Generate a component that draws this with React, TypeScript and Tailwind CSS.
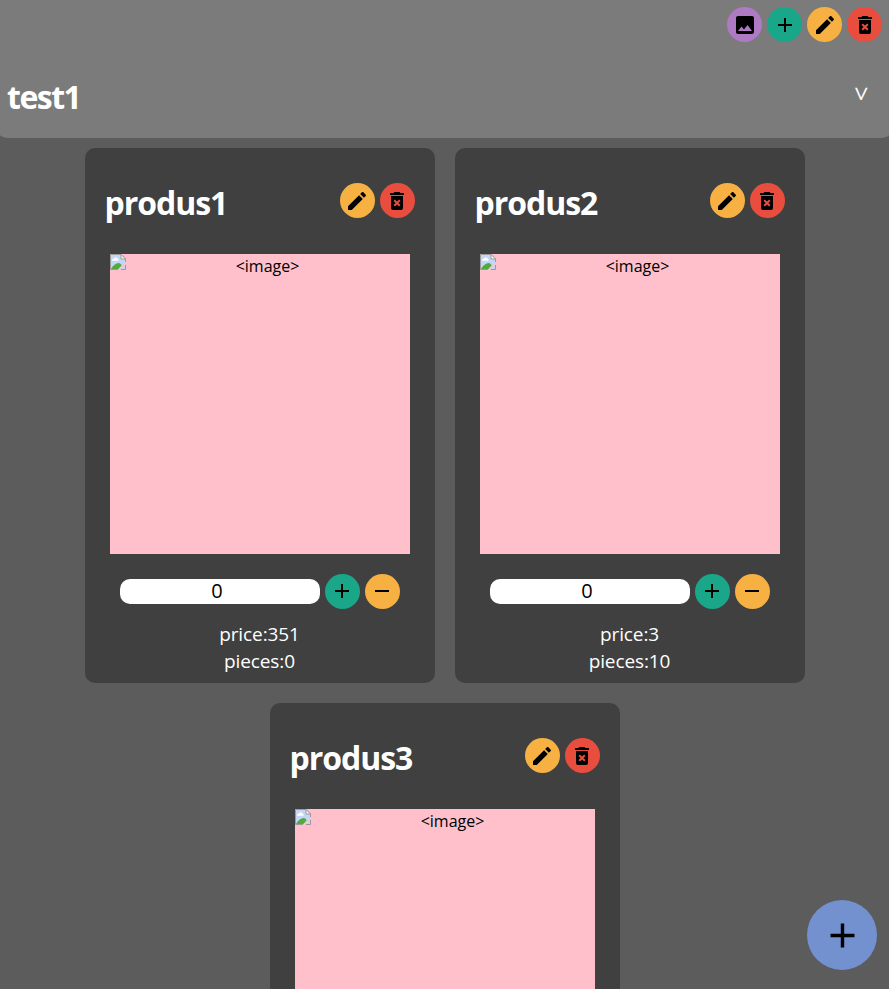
import React from "react";

const PATHS = {
  image:
    "M21 19V5c0-1.1-.9-2-2-2H5c-1.1 0-2 .9-2 2v14c0 1.1.9 2 2 2h14c1.1 0 2-.9 2-2zM8.5 13.5l2.5 3.01L14.5 12l4.5 6H5l3.5-4.5z",
  add: "M19 13h-6v6h-2v-6H5v-2h6V5h2v6h6v2z",
  remove: "M19 13H5v-2h14v2z",
  edit: "M3 17.25V21h3.75L17.81 9.94l-3.75-3.75L3 17.25zM20.71 7.04c.39-.39.39-1.02 0-1.41l-2.34-2.34c-.39-.39-1.02-.39-1.41 0l-1.83 1.83 3.75 3.75 1.83-1.83z",
  trash:
    "M6 19a2 2 0 0 0 2 2h8a2 2 0 0 0 2-2V7H6v12zM8.46 11.88l1.41-1.41L12 12.59l2.12-2.12 1.41 1.41L13.41 14l2.12 2.12-1.41 1.41L12 15.41l-2.12 2.12-1.41-1.41L10.59 14l-2.13-2.12zM15.5 4l-1-1h-5l-1 1H5v2h14V4z",
};

function RoundButton({
  icon,
  color,
  pad = "pl-1.5 pt-1.5",
}: {
  icon: keyof typeof PATHS;
  color: string;
  pad?: string;
}) {
  return (
    <button className={`flex size-[35px] shrink-0 items-start justify-start rounded-full ${color} ${pad}`}>
      <svg viewBox="0 0 24 24" className="size-6 shrink-0" fill="black">
        <path d={PATHS[icon]} fillRule="evenodd" />
      </svg>
    </button>
  );
}

function BrokenImage() {
  return (
    <svg viewBox="0 0 16 16" className="size-4 shrink-0">
      <path d="M0.5 0.5H11L15.5 5V9L8.5 15.5H0.5Z" fill="#c4d6f6" />
      <path d="M2 6.5C2 5 3.3 4.6 4 4.8C4.6 3 7.4 3.2 7.6 5C9 5 9 6.7 8 6.7H2.6Z" fill="white" />
      <path d="M1 15C3 11.5 6 9 8.5 9C10 9 11 10 11.6 11.5L8 15.2H1Z" fill="#4fab3c" />
      <path d="M0.5 15.5V0.5H11L15.5 5V8M0.5 15.5H8" fill="none" stroke="#9a9a9a" />
      <path d="M11 0.5V5H15.5Z" fill="white" stroke="#9a9a9a" />
      <path d="M15.5 11V15.5H11Z" fill="#c4d6f6" />
      <path d="M15.5 11V15.5H11" fill="none" stroke="#9a9a9a" />
    </svg>
  );
}

function ProductCard({ name, price, pieces }: { name: string; price: number; pieces: number }) {
  return (
    <article className="flex h-[535px] w-[350px] flex-col rounded-[10px] bg-[#404040]">
      <div className="flex h-[106px] items-center justify-between px-5 pb-0.5">
        <h2 className="pt-1 text-[32px] leading-[43px] font-bold tracking-[-1.05px]">{name}</h2>
        <div className="flex gap-[5px]">
          <RoundButton icon="edit" color="bg-[#f7b042]" pad="pl-[5px] pt-1.5" />
          <RoundButton icon="trash" color="bg-[#e94d3d]" pad="pl-[5px] pt-1.5" />
        </div>
      </div>
      <div className="mx-auto flex size-[300px] items-start bg-[#ffc0cb] text-black">
        <BrokenImage />
        <span className="grow text-center text-base leading-6">&lt;image&gt;</span>
      </div>
      <div className="mt-5 flex items-center gap-[5px] pl-[35px]">
        <div className="h-[25px] w-[200px] rounded-[10px] bg-white pr-[5px] text-center text-xl leading-6 text-black">
          0
        </div>
        <RoundButton icon="add" color="bg-[#19a689]" pad="pl-[5px] pt-[5px]" />
        <RoundButton icon="remove" color="bg-[#f7b042]" pad="pl-[5px] pt-[5px]" />
      </div>
      <div className="mt-3 text-center text-[19px] leading-[27px] tracking-[-0.1px]">
        <p>price:{price}</p>
        <p>pieces:{pieces}</p>
      </div>
    </article>
  );
}

export default function App() {
  return (
    <div className="h-[989px] w-full overflow-hidden bg-[#5c5c5c] font-['Open_Sans','Noto_Sans',sans-serif] text-white">
      <header className="-mx-[3px] flex h-[138px] flex-col rounded-b-[10px] bg-[#7b7b7b] px-[3px]">
        <div className="flex justify-end gap-[5px] pt-[7px] pr-[7px]">
          <RoundButton icon="image" color="bg-[#ae7ac4]" />
          <RoundButton icon="add" color="bg-[#19a689]" />
          <RoundButton icon="edit" color="bg-[#f7b042]" />
          <RoundButton icon="trash" color="bg-[#e94d3d]" />
        </div>
        <div className="mt-[33px] flex items-start justify-between pr-[19px] pl-[7px]">
          <h1 className="text-[32px] leading-[43px] font-bold tracking-[-1.5px]">test1</h1>
          <span className="mt-1.5 rotate-90 text-[26px] leading-none font-medium">&gt;</span>
        </div>
      </header>
      <main className="mx-auto flex w-[720px] flex-wrap justify-center gap-5 pt-2.5">
        <ProductCard name="produs1" price={351} pieces={0} />
        <ProductCard name="produs2" price={3} pieces={10} />
        <ProductCard name="produs3" price={3} pieces={10} />
      </main>
      <button className="fixed right-3 bottom-[19px] flex size-[70px] items-center justify-center rounded-full bg-[#7391cf]">
        <svg viewBox="0 0 24 24" className="size-[41px]" fill="black">
          <path d={PATHS.add} />
        </svg>
      </button>
    </div>
  );
}
